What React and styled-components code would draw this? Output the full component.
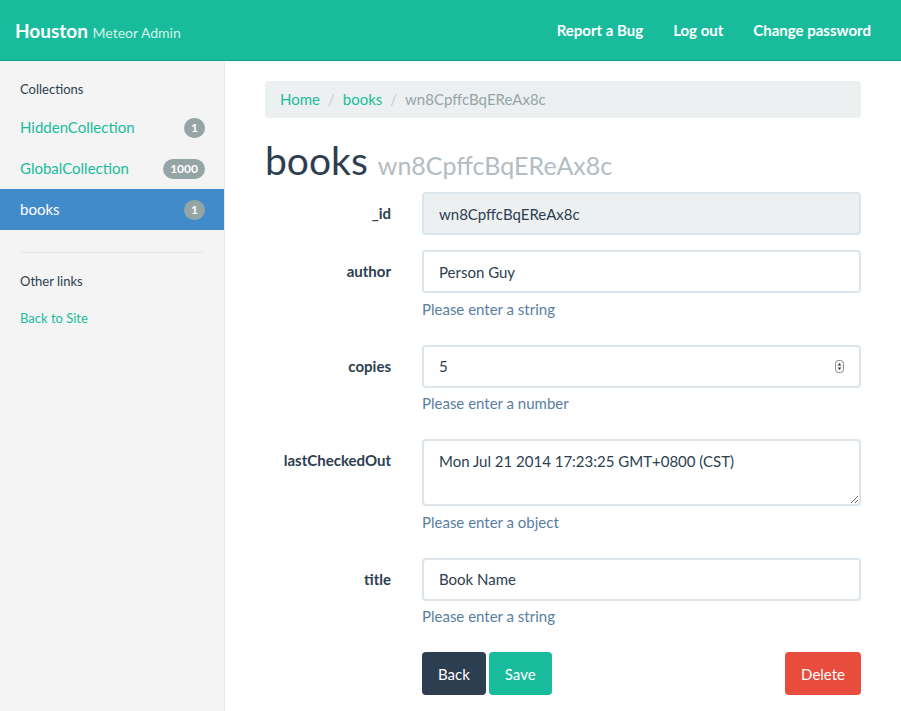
import styled, { createGlobalStyle } from "styled-components";

const GlobalStyle = createGlobalStyle`
  * { box-sizing: border-box; }
  body {
    margin: 0;
    font-family: Lato, "Open Sans", sans-serif;
    font-size: 15px;
    line-height: 1.42857;
    color: #2c3e50;
    background: #fff;
  }
`;

const collections = [
  { name: "HiddenCollection", count: 1 },
  { name: "GlobalCollection", count: 1000 },
  { name: "books", count: 1, active: true },
];

const fields = [
  { label: "_id", value: "wn8CpffcBqEReAx8c", disabled: true },
  { label: "author", value: "Person Guy", help: "Please enter a string" },
  { label: "copies", value: "5", help: "Please enter a number", number: true },
  {
    label: "lastCheckedOut",
    value: "Mon Jul 21 2014 17:23:25 GMT+0800 (CST)",
    help: "Please enter a object",
    area: true,
  },
  { label: "title", value: "Book Name", help: "Please enter a string" },
];

export default function App() {
  return (
    <Page>
      <GlobalStyle />
      <Navbar>
        <Brand>
          Houston <small>Meteor Admin</small>
        </Brand>
        <NavLinks>
          <a>Report a Bug</a>
          <a>Log out</a>
          <a>Change password</a>
        </NavLinks>
      </Navbar>
      <Body>
        <Sidebar>
          <SideHeader>Collections</SideHeader>
          {collections.map((c) => (
            <SideItem key={c.name} $active={c.active}>
              <span>{c.name}</span>
              <Badge>{c.count}</Badge>
            </SideItem>
          ))}
          <Divider />
          <SideHeader>Other links</SideHeader>
          <SideLink>Back to Site</SideLink>
        </Sidebar>
        <Main>
          <Breadcrumb>
            <a>Home</a>
            <Sep>/</Sep>
            <a>books</a>
            <Sep>/</Sep>
            <span>wn8CpffcBqEReAx8c</span>
          </Breadcrumb>
          <Title>
            books <small>wn8CpffcBqEReAx8c</small>
          </Title>
          <Form>
            {fields.map((f) => (
              <FormGroup key={f.label}>
                <Label>{f.label}</Label>
                <div>
                  {f.area ? (
                    <TextArea readOnly defaultValue={f.value} />
                  ) : (
                    <InputWrap>
                      <Input
                        readOnly
                        defaultValue={f.value}
                        $disabled={f.disabled}
                      />
                      {f.number && (
                        <Spinner width="9" height="13" viewBox="0 0 9 13">
                          <rect x="0.5" y="0.5" width="8" height="12" rx="3" fill="#fafafa" stroke="#8a8a8a" />
                          <path d="M4.5 3 L6.3 5.4 L2.7 5.4 Z" fill="#333" />
                          <path d="M4.5 10 L6.3 7.6 L2.7 7.6 Z" fill="#333" />
                        </Spinner>
                      )}
                    </InputWrap>
                  )}
                  {f.help && <Help>{f.help}</Help>}
                </div>
              </FormGroup>
            ))}
            <FormGroup>
              <span />
              <Actions>
                <Button $bg="#2c3e50">Back</Button>
                <Button $bg="#18bc9c">Save</Button>
                <Button $bg="#e74c3c" $right>
                  Delete
                </Button>
              </Actions>
            </FormGroup>
          </Form>
        </Main>
      </Body>
    </Page>
  );
}

const Page = styled.div`
  min-height: 100vh;
  display: flex;
  flex-direction: column;
`;

const Navbar = styled.header`
  height: 61px;
  background: #18bc9c;
  border-bottom: 1px solid #14a085;
  display: flex;
  align-items: center;
  justify-content: space-between;
  padding: 2px 15px 0;
  color: #fff;
`;

const Brand = styled.div`
  font-size: 19px;
  font-weight: 700;
  small {
    font-size: 14px;
    font-weight: 400;
    color: #d4f2eb;
  }
`;

const NavLinks = styled.nav`
  display: flex;
  a {
    padding: 0 15px;
    font-weight: 700;
    color: #fff;
  }
`;

const Body = styled.div`
  flex: 1;
  display: grid;
  grid-template-columns: 225px 1fr;
`;

const Sidebar = styled.aside`
  background: #f4f4f4;
  border-right: 1px solid #e8e8e8;
  padding-top: 18px;
`;

const SideHeader = styled.div`
  font-size: 13px;
  padding: 0 20px;
  line-height: 20px;
  margin-bottom: 8px;
`;

const SideItem = styled.div`
  display: flex;
  justify-content: space-between;
  align-items: center;
  height: 41px;
  padding: 0 19px 0 20px;
  font-size: 15px;
  color: ${(p) => (p.$active ? "#fff" : "#18bc9c")};
  background: ${(p) => (p.$active ? "#428bca" : "transparent")};
`;

const Badge = styled.span`
  background: #95a5a6;
  color: #fff;
  font-size: 12px;
  font-weight: 700;
  line-height: 1;
  padding: 4px 7px;
  border-radius: 10px;
  min-width: 20px;
  text-align: center;
`;

const Divider = styled.hr`
  border: 0;
  border-top: 1px solid #e7e7e7;
  margin: 22px 20px 18px;
`;

const SideLink = styled.a`
  display: block;
  padding: 10px 20px;
  font-size: 13px;
  color: #18bc9c;
`;

const Main = styled.main`
  padding: 20px 40px;
`;

const Breadcrumb = styled.div`
  background: #ecf0f1;
  border-radius: 4px;
  padding: 8px 15px;
  line-height: 21px;
  color: #95a5a6;
  margin-bottom: 21px;
  a {
    color: #18bc9c;
  }
`;

const Sep = styled.span`
  color: #ccc;
  padding: 0 8px;
`;

const Title = styled.h1`
  font-size: 39px;
  font-weight: 400;
  line-height: 43px;
  margin: 0 0 5px;
  small {
    font-size: 25px;
    color: #b4bcc2;
    font-weight: 400;
  }
`;

const Form = styled.div``;

const FormGroup = styled.div`
  display: grid;
  grid-template-columns: 126px 1fr;
  column-gap: 31px;
  margin-bottom: 15px;
`;

const Label = styled.label`
  text-align: right;
  font-weight: 700;
  padding-top: 11px;
  line-height: 21px;
`;

const InputWrap = styled.div`
  position: relative;
`;

const fieldBase = `
  display: block;
  width: 100%;
  border: 2px solid #dce4ec;
  border-radius: 4px;
  font-family: Lato, "Open Sans", sans-serif;
  font-size: 15px;
  color: #2c3e50;
  padding: 10px 15px;
  line-height: 21px;
  outline: none;
`;

const Input = styled.input`
  ${fieldBase}
  height: 43px;
  background: ${(p) => (p.$disabled ? "#ecf0f1" : "#fff")};
`;

const TextArea = styled.textarea`
  ${fieldBase}
  height: 67px;
  resize: vertical;
  background: #fff;
`;

const Spinner = styled.svg`
  position: absolute;
  right: 17px;
  top: 15px;
`;

const Help = styled.div`
  color: #597ea2;
  margin: 5.5px 0 10px;
  line-height: 21px;
`;

const Actions = styled.div`
  display: flex;
  gap: 3px;
`;

const Button = styled.button`
  height: 43px;
  padding: 0 16px;
  border: 0;
  border-radius: 4px;
  font-family: Lato, "Open Sans", sans-serif;
  font-size: 15px;
  color: #fff;
  background: ${(p) => p.$bg};
  margin-left: ${(p) => (p.$right ? "auto" : "0")};
`;
